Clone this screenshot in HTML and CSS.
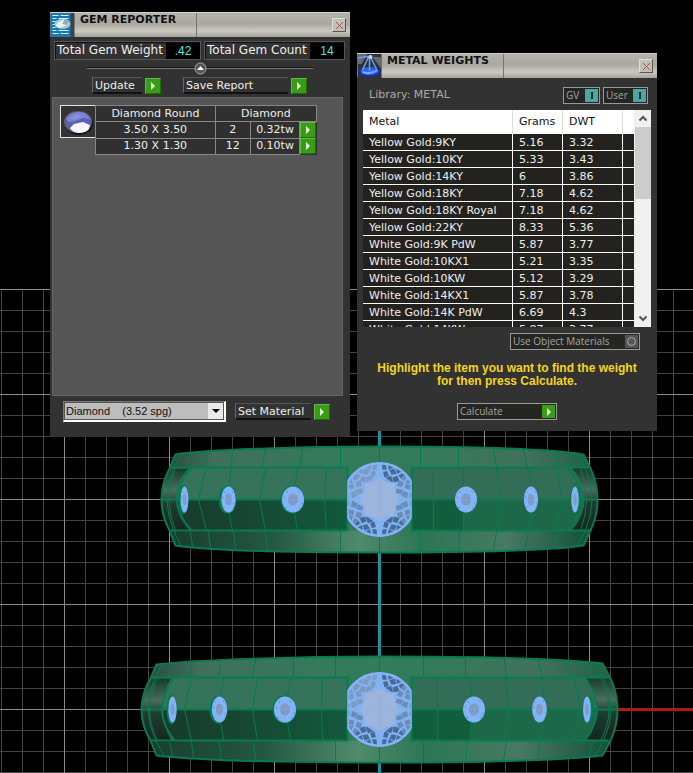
FILE: index.html
```html
<!DOCTYPE html>
<html lang="en">
<head>
<meta charset="utf-8">
<meta name="viewport" content="width=device-width, initial-scale=1">
<title>Ring model workspace</title>
<link rel="stylesheet" href="styles.css">
</head>
<body>
<main class="workspace">
<svg class="viewport" width="100%" height="100%" aria-hidden="true">
  <defs>
    <pattern id="grid" x="64" y="289" width="105" height="105" patternUnits="userSpaceOnUse">
      <path d="M21.5 0V105M42.5 0V105M63.5 0V105M84.5 0V105M0 21.5H105M0 42.5H105M0 63.5H105M0 84.5H105" stroke="#444"/>
      <path d="M.5 0V105M0 .5H105" stroke="#8a8a8a"/>
    </pattern>
    <linearGradient id="body" x1="0" x2="1"><stop offset="0" stop-color="#26483a"/><stop offset=".12" stop-color="#406f5d"/><stop offset=".4" stop-color="#337b5b"/><stop offset=".6" stop-color="#347b5a"/><stop offset=".84" stop-color="#41715c"/><stop offset="1" stop-color="#1d6144"/></linearGradient>
    <linearGradient id="under" x1="0" x2="1"><stop offset="0" stop-color="#183e2e"/><stop offset=".25" stop-color="#245843"/><stop offset=".45" stop-color="#508a6c"/><stop offset=".6" stop-color="#2c7655"/><stop offset=".8" stop-color="#477964"/><stop offset="1" stop-color="#15513a"/></linearGradient>
    <linearGradient id="shade" x1="0" x2="1"><stop offset="0" stop-color="#183a2c"/><stop offset="1" stop-color="#13593d"/></linearGradient>
    <linearGradient id="cap" x1="0" y1="0" x2="0" y2="1"><stop offset="0" stop-color="#173b2c"/><stop offset=".35" stop-color="#4a6d60"/><stop offset=".55" stop-color="#1f3c31"/><stop offset="1" stop-color="#15251f"/></linearGradient>
    <clipPath id="channel"><rect x="-32" y="-38" width="64" height="76"/></clipPath>
    <g id="facet">
      <path d="M0-19l4 4.500-4 1-4-1zM0-26.500l4.500 4.500-4.500 4.500-4.500-4.500zM0-34.500l4 4-4 3-4-3zM5.500-29l4.500 3.500-4.500 4-3.500-4zM-5.500-29l-4.500 3.500 4.500 4 3.500-4zM1.500-35l6 .5-3 4zM-1.500-35l-6 .5 3 4zM9-33.500l4 1-2.500 4.500-4-2zM-9-33.500l-4 1 2.500 4.500 4-2z"/>
    </g>
    <g id="gem">
      <g clip-path="url(#channel)">
        <circle r="37" fill="#83b2f2"/>
        <g fill="#486c98">
          <use href="#facet" transform="rotate(26)"/><use href="#facet" transform="rotate(154)"/><use href="#facet" transform="rotate(206)"/>
        </g>
        <g fill="#6b8db6"><use href="#facet" transform="rotate(66)"/><use href="#facet" transform="rotate(114)"/><use href="#facet" transform="rotate(246)"/></g>
        <g fill="#7c9ac0"><use href="#facet" transform="rotate(294)"/><use href="#facet" transform="rotate(334)"/></g>
        <path d="M0-37L-4-22-18-12-33-8M0-37L4-22 18-12 33-8M0 37L-4 22-18 12-33 8M0 37L4 22 18 12 33 8" fill="none" stroke="#83b2f2" stroke-width="2"/>
        <path d="M0-22L6-18 15-16 16-7 20 0 16 7 15 16 6 18 0 22-6 18-15 16-16 7-20 0-16-7-15-16-6-18Z" fill="#9db4dc" stroke="#86b2f2"/>
        <path d="M0-37V37M-32 0H32" stroke="#82b1f3" opacity=".7"/>
        <circle r="36.500" fill="none" stroke="#83b3fa" stroke-width="2"/>
        <path d="M-32-18V18M32-18V18" stroke="#83b3fa" stroke-width="2"/>
      </g>
    </g>
    <g id="stone">
      <ellipse rx="11" ry="13" fill="#83b4fa"/>
      <ellipse rx="5" ry="6" fill="#8299b8"/>
      <path d="M-5 0H5M0-6V6" stroke="#75a5e8"/>
      <path d="M-7-8l2 1M5-9l2 2M-8 8l2 0M6 9l2-1M-9-3l1 2M9 3l-1 2" stroke="#638abf"/>
    </g>
  </defs>
  <rect y="289" width="100%" height="100%" fill="url(#grid)"/>
  <path d="M379.500 430V773" stroke="#16939b" stroke-width="3"/>
  <path d="M605 709.500H2400" stroke="#b31a0d" stroke-width="3"/>

  <!-- Upper ring, drawn round its own centre -->
  <g transform="translate(379.5 499.500)" stroke-linejoin="round">
    <path d="M-204-45C-170-50-80-53 0-53S170-51 204-45L211-31Q218-16 218 0T211 31L204 46C170 51 80 53 0 53S-170 51-204 46L-210 31Q-218 16-218 0T-210-31Z" fill="url(#body)"/>
    <path d="M-210 31H211L204 46C170 51 80 53 0 53S-170 51-204 46Z" fill="url(#under)"/>
    <path d="M-207-31H-180V32H-210Q-218 16-218 0T-207-31Z" fill="url(#cap)"/>
    <path d="M190-32H211Q218-16 218 0T211 31H190Q206 0 190-32Z" fill="url(#cap)"/>
    <path d="M-32-32H-190Q-205-16-203 0T-190 31H-32Z" fill="#35735b"/>
    <path d="M-32 0H-203Q-203 20-190 31H-32Z" fill="url(#shade)"/>
    <path d="M32-32H192Q205-16 205 0T192 31H32Z" fill="#336d58"/>
    <path d="M32 0H205Q203 20 192 31H32Z" fill="#1d6848"/>
    <path d="M32 0H83V31H32Z" fill="#125d3e"/>
    <g fill="none" stroke="#087b4e">
      <path d="M-189-48l-4 16M-171-49l-4 17M-146-50l-3 18M-114-51l-3 19M-77-52l-3 20M-39-53V-32M-189 32l2 15M-171 32l2 17M-146 32l2 18M-114 32l2 19M-77 32l2 20M-39 32V52M41-53V-32M79-52V-32M114-51l3 19M144-50l4 18M175-48l5 16M191-47l5 15M41 32V52M80 32l-1 20M117 32l-3 18M149 32l-4 17M179 32l-3 15"/>
      <path d="M-181 0l8 31M-153 0l6 31M-120 0l6 31M-87 0l5 31M-55 0l2 31M-181-1l8-30M-153-1l5-30M-120-1l6-30M-87-1l5-30M-55-1l2-30M54-31V31M84-31V31M117-31l4 31-5 31M149-31l6 31-7 31M177-31l6 31-7 31"/>
      <path d="M-198-46l-8 15Q-219 0-206 31l8 16M-204-32Q-217 0-204 31M198-46l8 15Q219 0 206 31l-8 15M201-31Q213 0 201 31" stroke-width="1"/>
    </g>
    <path d="M-204-45C-170-50-80-53 0-53S170-51 204-45L211-31Q218-16 218 0T211 31L204 46C170 51 80 53 0 53S-170 51-204 46L-210 31Q-218 16-218 0T-210-31ZM-210-32H-32V31H-210M210-32H32V31H210M-218 0H-32M32 0H218M-188-32Q-217 0-188 31M188-32Q217 0 188 31" fill="none" stroke="#087c50" stroke-width="2"/>
    <path d="M0-53V53" stroke="#087b4e"/>
    <use href="#gem"/>
    <g fill="#087b4e"><ellipse cx="-196" rx="5" ry="15"/><ellipse cx="-152" rx="9" ry="14"/><ellipse cx="-87" rx="12" ry="14"/><ellipse cx="196" cy="-2" rx="5" ry="13"/></g>
    <use href="#stone" transform="translate(-195 0) scale(.36 1)"/><use href="#stone" transform="translate(-151 0) scale(.65 1)"/><use href="#stone" transform="translate(-86.500 0)"/>
    <use href="#stone" transform="translate(86.500 0)"/><use href="#stone" transform="translate(151.500 0) scale(.65 1)"/><use href="#stone" transform="translate(195.500 0) scale(.34 1)"/>
  </g>

  <!-- Lower, wider ring -->
  <g transform="translate(379.5 709.500)" stroke-linejoin="round">
    <path d="M-223-45C-180-50-80-53 0-53S180-51 223-46L231-31Q238-16 238 0T231 31L223 46C180 51 80 53 0 53S-180 51-223 46L-229 31Q-238 16-238 0T-229-31Z" fill="url(#body)"/>
    <path d="M-229 31H231L223 46C180 51 80 53 0 53S-180 51-223 46Z" fill="url(#under)"/>
    <path d="M-227-31H-200V32H-229Q-238 16-238 0T-227-31Z" fill="url(#cap)"/>
    <path d="M207-32H231Q238-16 238 0T231 31H207Q223 0 207-32Z" fill="url(#cap)"/>
    <path d="M-32-32H-208Q-217-16-217 0T-208 31H-32Z" fill="#35735b"/>
    <path d="M-32 0H-217Q-217 20-206 31H-32Z" fill="url(#shade)"/>
    <path d="M32-32H206Q217-16 217 0T206 31H32Z" fill="#336d58"/>
    <path d="M32 0H217Q217 20 206 31H32Z" fill="#1d6848"/>
    <path d="M32 0H93L90 31H32Z" fill="#125d3e"/>
    <g fill="none" stroke="#087b4e">
      <path d="M-208-48l-3 16M-187-49l-3 17M-159-50l-2 18M-124-51l-3 19M-86-52V-32M-44-53V-32M-210 32l3 15M-188 32l2 16M-160 32l2 18M-126 32l2 19M-86 32V52M-44 32V52M44-53V-32M86-52V-32M125-51l2 19M159-50l4 18M187-48l5 16M209-47l4 15M44 32V52M88 32l-2 20M127 32l-3 19M161 32l-3 17M190 32l-3 15M213 32l-3 14"/>
      <path d="M-195 0l7 31M-161 0l5 31M-127 0l5 31M-94 0l5 31M-58 0l1 31M-195-1l7-30M-161-1l5-30M-127-1l5-30M-94-1l5-30M-58-1l1-30M58-31V31M90-31l3 31-3 31M126-31l3 31-4 31M161-31l6 31-7 31M195-31l6 31-7 31"/>
      <path d="M-217-46l-8 15Q-238 0-224 31l9 16M-222-32Q-238 0-222 31M216-46l8 15Q239 0 224 31l-8 15M221-31Q238 0 221 31"/>
    </g>
    <path d="M-223-45C-180-50-80-53 0-53S180-51 223-46L231-31Q238-16 238 0T231 31L223 46C180 51 80 53 0 53S-180 51-223 46L-229 31Q-238 16-238 0T-229-31ZM-229-32H-32V31H-229M229-32H32V31H229M-238 0H-32M32 0H238M-205-32Q-230 0-205 31M205-32Q230 0 205 31" fill="none" stroke="#087c50" stroke-width="2"/>
    <path d="M0-53V53" stroke="#087b4e"/>
    <use href="#gem"/>
    <g fill="#087b4e"><ellipse cx="-208" rx="5" ry="15"/><ellipse cx="-161" rx="9" ry="14"/><ellipse cx="-95" rx="12" ry="14"/><ellipse cx="209" cy="-1" rx="5" ry="13"/></g>
    <use href="#stone" transform="translate(-207 0) scale(.38 1)"/><use href="#stone" transform="translate(-160 0) scale(.7 1)"/><use href="#stone" transform="translate(-94.500 0)"/>
    <use href="#stone" transform="translate(94.500 0)"/><use href="#stone" transform="translate(160 0) scale(.67 1)"/><use href="#stone" transform="translate(207.500 0) scale(.36 1)"/>
  </g>
</svg>

<section class="window gem" aria-labelledby="gem-title">
  <header class="titlebar">
    <svg class="app-icon" viewBox="0 0 24 24" aria-hidden="true"><rect width="24" height="24" fill="#3d4249"/><rect width="20" height="24" fill="#1878b5"/><path d="M2 2.500H8M10 2.500H18M2 5.500H6M8 5.500H18M2 8.500H5M2 11.500H4M2 14.500H5M2 17.500H6M8 17.500H18M2 20.500H8M10 20.500H18" stroke="#d9f4ff"/><ellipse cx="12" cy="11" rx="8" ry="5" fill="#a6c9d9"/><path d="M5 13l3-4 6-3 5 2-4 5-6 2z" fill="#e9f1ef"/><path d="M14 6l5 2-3 4-4-1z" fill="#8caeb9"/></svg>
    <h1 id="gem-title" class="title">GEM REPORTER</h1>
    <button class="close" aria-label="Close gem reporter"><svg viewBox="0 0 11 11"><path d="M2 2l7 7M9 2L2 9" stroke="#b24d49"/></svg></button>
  </header>
  <div class="gem-content">
    <dl class="totals">
      <div class="total total-weight"><dt>Total Gem Weight</dt><dd>.42</dd></div>
      <div class="total total-count"><dt>Total Gem Count</dt><dd>14</dd></div>
    </dl>
    <div class="divider"><button class="collapse" aria-label="Collapse totals"><svg viewBox="0 0 13 13"><circle cx="6.500" cy="6.500" r="5.500" fill="#555" stroke="#aaa"/><path d="M3 8l3.500-4L10 8z" fill="#fff"/></svg></button></div>
    <div class="actions">
      <button class="action"><span class="action-label update">Update</span><span class="go"></span></button>
      <button class="action"><span class="action-label save">Save Report</span><span class="go"></span></button>
    </div>
    <div class="gem-list">
      <svg class="gem-thumb" viewBox="0 0 34 31" aria-hidden="true"><ellipse cx="18" cy="18" rx="14" ry="11" fill="#171717"/><ellipse cx="17" cy="16" rx="14" ry="11" fill="#5e5e79"/><path d="M5 13Q8 7 17 6t13 8l-8-2-6 3-9 1z" fill="#7b82d2"/><path d="M4 16l8 0 10-4 8 2-1 5-10-1-5 3-8-1z" fill="#5961bd"/><path d="M9 22l4-4 9-2 7 3-1 4Q25 27 17 27q-6-1-8-5z" fill="#f5f6ff"/><path d="M8 12l8-4 6 2-9 4z" fill="#8a8edb"/></svg>
      <table class="gems">
        <thead><tr><th>Diamond Round</th><th colspan="3">Diamond</th></tr></thead>
        <tbody>
          <tr><td class="size">3.50 X 3.50</td><td class="count">2</td><td class="carats">0.32tw</td><td class="go-cell"><button class="go" aria-label="Show 3.50 stones"></button></td></tr>
          <tr><td class="size">1.30 X 1.30</td><td class="count">12</td><td class="carats">0.10tw</td><td class="go-cell"><button class="go" aria-label="Show 1.30 stones"></button></td></tr>
        </tbody>
      </table>
    </div>
    <div class="material">
      <div class="select-box"><select aria-label="Material"><option>Diamond &nbsp;&nbsp; (3.52 spg)</option></select><span class="drop" aria-hidden="true"></span></div>
      <button class="action"><span class="action-label set">Set Material</span><span class="go"></span></button>
    </div>
  </div>
</section>

<section class="window metal" aria-labelledby="metal-title">
  <header class="titlebar">
    <svg class="app-icon" viewBox="0 0 24 24" aria-hidden="true"><rect width="24" height="24" fill="#303238"/><path d="M0 0H10L4 10H0zM15 3h9v12z" fill="#686b73"/><ellipse cx="12" cy="18" rx="11" ry="5" fill="#1430a9"/><ellipse cx="12" cy="17" rx="9" ry="4" fill="#2765ed"/><path d="M5 18Q13 21 20 16" fill="none" stroke="#78a8ff" stroke-width="2"/><path d="M0 4L14 2M11 3L5 16M12 3V17M13 3l6 12" fill="none" stroke="#65a0fa" stroke-width="1.500"/><circle cx="13" cy="3" r="2" fill="#b6d7ff"/></svg>
    <h1 id="metal-title" class="title">METAL WEIGHTS</h1>
    <button class="close" aria-label="Close metal weights"><svg viewBox="0 0 11 11"><path d="M2 2l7 7M9 2L2 9" stroke="#b24d49"/></svg></button>
  </header>
  <div class="library">
    <p>Library: METAL</p>
    <label class="toggle gv"><span>GV</span><input type="checkbox" checked></label>
    <label class="toggle user"><span>User</span><input type="checkbox" checked></label>
  </div>
  <div class="metal-list">
    <div class="table-clip">
      <table class="metals">
        <colgroup><col><col class="grams"><col class="dwt"><col class="spare"></colgroup>
        <thead><tr><th>Metal</th><th>Grams</th><th>DWT</th><th></th></tr></thead>
        <tbody>
          <tr><td>Yellow Gold:9KY</td><td>5.16</td><td>3.32</td><td></td></tr>
          <tr><td>Yellow Gold:10KY</td><td>5.33</td><td>3.43</td><td></td></tr>
          <tr><td>Yellow Gold:14KY</td><td>6</td><td>3.86</td><td></td></tr>
          <tr><td>Yellow Gold:18KY</td><td>7.18</td><td>4.62</td><td></td></tr>
          <tr><td>Yellow Gold:18KY Royal</td><td>7.18</td><td>4.62</td><td></td></tr>
          <tr><td>Yellow Gold:22KY</td><td>8.33</td><td>5.36</td><td></td></tr>
          <tr><td>White Gold:9K PdW</td><td>5.87</td><td>3.77</td><td></td></tr>
          <tr><td>White Gold:10KX1</td><td>5.21</td><td>3.35</td><td></td></tr>
          <tr><td>White Gold:10KW</td><td>5.12</td><td>3.29</td><td></td></tr>
          <tr><td>White Gold:14KX1</td><td>5.87</td><td>3.78</td><td></td></tr>
          <tr><td>White Gold:14K PdW</td><td>6.69</td><td>4.3</td><td></td></tr>
          <tr><td>White Gold:14KW</td><td>5.87</td><td>3.77</td><td></td></tr>
        </tbody>
      </table>
    </div>
    <div class="scrollbar" aria-hidden="true">
      <svg viewBox="0 0 16 16"><path d="M4.500 10L8 6.500l3.500 3.500" fill="none" stroke="#555" stroke-width="2"/></svg>
      <div class="thumb"></div>
      <svg viewBox="0 0 16 16"><path d="M4.500 6L8 9.500 11.500 6" fill="none" stroke="#555" stroke-width="2"/></svg>
    </div>
  </div>
  <div class="metal-actions">
    <button class="compact objects"><span>Use Object Materials</span><span class="ring"></span></button>
    <p class="hint">Highlight the item you want to find the weight<br>for then press Calculate.</p>
    <button class="compact calculate"><span>Calculate</span><span class="go small-go"></span></button>
  </div>
</section>
</main>
</body>
</html>
```
FILE: styles.css
```css
* { box-sizing: border-box; }
body { margin: 0; background: #000; color: #eee; font: 11px/14px "DejaVu Sans", sans-serif; }
p, h1, dl, dd { margin: 0; }
button { margin: 0; padding: 0; border: 0; background: none; color: inherit; font: inherit; text-align: left; }
table { border-collapse: collapse; table-layout: fixed; }

.workspace { position: relative; min-height: 100vh; overflow: hidden; }
.viewport { position: absolute; inset: 0; }

.window { position: absolute; width: 300px; background: #323232; }
.gem { left: 50px; top: 12px; padding-bottom: 15px; }
.metal { left: 357px; top: 53px; padding-bottom: 11px; }

.titlebar { display: flex; align-items: center; height: 25px; padding-right: 4px; background: linear-gradient(#b5b2ac, #aaa8a1 45%, #cbc8c0 75%, #a5a39c); border-top: 1px solid #d3d0c9; }
.app-icon { width: 25px; height: 24px; flex: none; }
.title { align-self: stretch; width: 122px; padding-left: 5px; border-right: 1px solid #77756f; color: #111; font: bold 11px/13px "DejaVu Sans", sans-serif; white-space: nowrap; }
.close { display: grid; place-items: center; width: 14px; height: 14px; margin-left: auto; border: 1px solid #ddd; border-right-color: #555; border-bottom-color: #555; background: #c2bfb9; }
.close svg { width: 11px; height: 11px; }

.gem-content { padding: 4px 5px 0 4px; }
.totals { display: flex; gap: 3px; height: 19px; font-size: 12px; }
.total { display: flex; border: 2px solid #111; border-right: 1px solid #777; border-bottom: 1px solid #777; outline: 1px solid #555; outline-offset: -1px; white-space: nowrap; }
.total-weight { width: 147px; }
.total-count { flex: 1; }
.total dt { flex: 1; padding-left: 1px; line-height: 14px; }
.total dd { width: 34px; background: #000; color: #49e7df; font: 12px/17px "Liberation Sans", sans-serif; text-align: center; }
.divider { display: grid; place-items: center; height: 16px; margin: 0 32px 0 33px; background: linear-gradient(#111, #111) 0 7px / 100% 1px no-repeat, linear-gradient(#777a6c, #777a6c) 0 8px / 100% 1px no-repeat; }
.collapse { width: 13px; height: 13px; }
.collapse svg { display: block; }
.actions { display: flex; gap: 22px; padding: 1px 0 0 38px; }
.action { display: flex; align-items: center; gap: 3px; }
.action-label { height: 17px; padding-left: 2px; border-top: 1px solid #555; border-left: 1px solid #666; border-bottom: 2px solid #111; line-height: 16px; white-space: nowrap; }
.update { width: 50px; }
.save { width: 105px; }
.set { width: 76px; }
.go { display: grid; place-items: center; flex: none; width: 16px; height: 16px; background: #399c17; border: 1px solid #66b64e; border-right-color: #216b0a; border-bottom-color: #216b0a; }
.go::after { content: ""; border: 4px solid transparent; border-left: 4px solid #e3ffdb; border-right: 0; }

.gem-list { display: flex; align-items: flex-start; height: 299px; margin: 3px 2px 0 -2px; padding: 7px; background: #555; border: 1px solid #666; }
.gem-thumb { flex: none; width: 36px; height: 33px; border: 1px solid #e4e4e4; background: #333; }
.gems { table-layout: auto; width: 222px; margin-left: -1px; background: #303030; }
.gems tr { height: 16px; }
.gems th, .gems td { height: 16px; padding: 0; border: 1px solid #888; font-weight: normal; line-height: 14px; text-align: center; white-space: nowrap; }
.gems th:first-child { width: 120px; }
.gems .go-cell { border: 0; }
.size { width: 120px; }
.count { width: 35px; }
.carats { width: 50px; }
.go-cell { width: 16px; }

.material { display: flex; align-items: center; gap: 9px; padding: 5px 0 0 9px; }
.select-box { position: relative; width: 163px; height: 21px; border: 1px solid #777; border-right: 2px solid #fff; border-bottom: 2px solid #fff; }
.select-box select { width: 100%; height: 100%; padding: 0 0 0 1px; appearance: none; border: 1px solid #555; border-radius: 0; background: #bdbdbd; color: #111; font: 11px/14px "Liberation Sans", sans-serif; }
.drop { position: absolute; top: 1px; right: 0; bottom: 0; display: grid; place-items: center; width: 16px; background: #e9e9e9; border-right: 1px solid #555; border-bottom: 1px solid #555; pointer-events: none; }
.drop::after { content: ""; border: 4px solid transparent; border-top-color: #000; border-bottom: 0; }

.library { display: flex; align-items: center; gap: 3px; height: 32px; padding: 2px 9px 0 12px; color: #aaa; }
.library p { flex: 1; }
.toggle { display: flex; align-items: center; justify-content: space-between; height: 17px; padding: 0 0 0 2px; background: #252521; border: 1px solid #999; font: 10px/15px "Open Sans", sans-serif; color: #a5a5a5; }
.gv { width: 37px; }
.user { width: 45px; }
.toggle input { display: grid; place-items: center; width: 13px; height: 13px; margin: 0 1px 0 0; appearance: none; background: #48aaa4; }
.toggle input::after { content: ""; width: 2px; height: 7px; background: #051d1d; }

.metal-list { display: flex; height: 217px; margin: 0 6px; background: #fff; }
.table-clip { flex: 1; overflow: hidden; }
.metals { width: 100%; border-collapse: separate; border-spacing: 0; background: #23221f; }
.metals col.grams { width: 50px; }
.metals col.dwt { width: 60px; }
.metals col.spare { width: 11px; }
.metals th { height: 24px; padding: 0 0 0 6px; background: #fff; border-right: 1px solid #ddd; color: #111; font-weight: normal; text-align: left; }
.metals td { height: 17px; padding: 1px 0 0 6px; border-right: 1px solid #fff; border-bottom: 1px solid #fff; line-height: 15px; white-space: nowrap; }
.metals th:last-child, .metals td:last-child { border-right: 0; padding: 0; }
.scrollbar { display: flex; flex-direction: column; width: 17px; padding-left: 1px; background: #f0f0f0; }
.scrollbar svg { width: 16px; height: 17px; flex: none; }
.thumb { height: 72px; margin-bottom: auto; background: #cdcdcd; }

.metal-actions { display: flex; flex-direction: column; align-items: center; padding: 6px 17px 0; }
.compact { display: flex; align-items: center; justify-content: space-between; height: 17px; padding: 0 1px 0 2px; background: #252521; border: 1px solid #999; color: #a5a5a5; font: 10px/15px "Open Sans", sans-serif; white-space: nowrap; }
.objects { align-self: flex-end; width: 130px; }
.ring { display: grid; place-items: center; width: 13px; height: 13px; background: #555; }
.ring::after { content: ""; width: 7px; height: 7px; border: 1px solid #aaa; border-radius: 50%; }
.hint { margin: 12px 0 15px; color: #f5d51a; font: bold 12px/13px "Liberation Sans", sans-serif; text-align: center; white-space: nowrap; }
.calculate { width: 100px; }
.small-go { width: 13px; height: 13px; border: 0; }
```
